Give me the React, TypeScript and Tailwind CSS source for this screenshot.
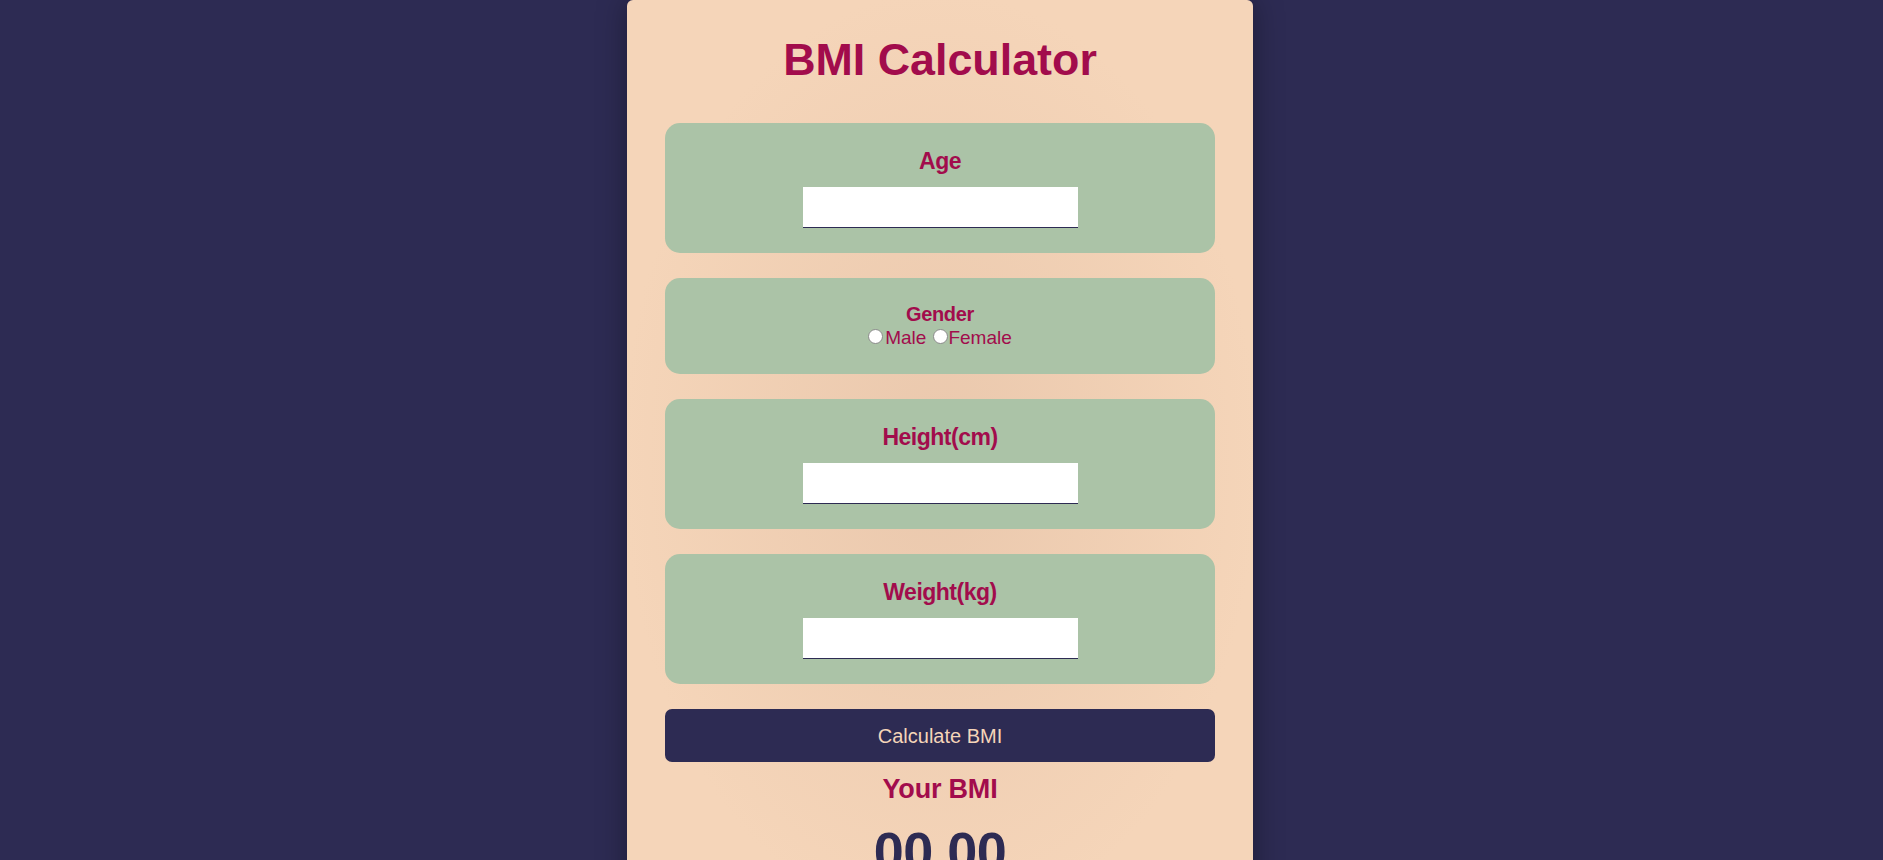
import React from "react";

const Field = ({ label }: { label: string }) => (
  <div className="flex flex-col items-center rounded-[15px] bg-[#abc3a7] p-[25px]">
    <label className="mb-[13px] text-[23px] font-bold leading-[26px] tracking-[-0.5px] text-[#a20c4c]">
      {label}
    </label>
    <input
      type="text"
      className="h-[41px] w-[275px] border-0 border-b border-solid border-[#2d2b53] bg-white outline-none"
    />
  </div>
);

const Radio = ({ className = "" }: { className?: string }) => (
  <span
    className={
      "mb-[3px] inline-block h-[15px] w-[15px] shrink-0 rounded-full border border-solid border-[#8a8a8a] bg-white " +
      className
    }
  />
);

export default function App() {
  return (
    <div
      className="flex min-h-screen w-full justify-center bg-[#2d2b53]"
      style={{ fontFamily: '"Liberation Sans", Arial, sans-serif' }}
    >
      <div className="mr-[3px] flex w-[626px] flex-col rounded-[6px] bg-[radial-gradient(ellipse_at_center,#eac8ad_0%,#f5d5b9_72%)] px-[38px] pb-[40px] pt-[34px] shadow-[0_0_30px_rgba(0,0,0,0.35)]">
        <h1 className="mb-[38px] text-center text-[44.8px] font-bold leading-[51px] text-[#a20c4c]">
          BMI Calculator
        </h1>
        <div className="flex flex-col gap-[25px]">
          <Field label="Age" />
          <div className="flex flex-col items-center rounded-[15px] bg-[#abc3a7] p-[25px]">
            <div className="text-[20px] font-bold leading-[23px] tracking-[-0.3px] text-[#a20c4c]">
              Gender
            </div>
            <div className="flex items-center text-[19px] leading-[23px] text-[#a20c4c]">
              <Radio className="mr-[2px]" />
              <span>Male</span>
              <Radio className="ml-[7px]" />
              <span>Female</span>
            </div>
          </div>
          <Field label="Height(cm)" />
          <Field label="Weight(kg)" />
          <button className="h-[53px] w-full rounded-[7px] bg-[#2d2b53] text-[20px] text-[#f5d5b9]">
            Calculate BMI
          </button>
        </div>
        <div className="mt-[12px] text-center text-[27px] font-bold leading-[31px] tracking-[-0.2px] text-[#a20c4c]">
          Your BMI
        </div>
        <div className="mt-[15px] text-center text-[54px] font-bold leading-[62px] tracking-[-0.5px] text-[#2d2b53]">
          00.00
        </div>
      </div>
    </div>
  );
}
